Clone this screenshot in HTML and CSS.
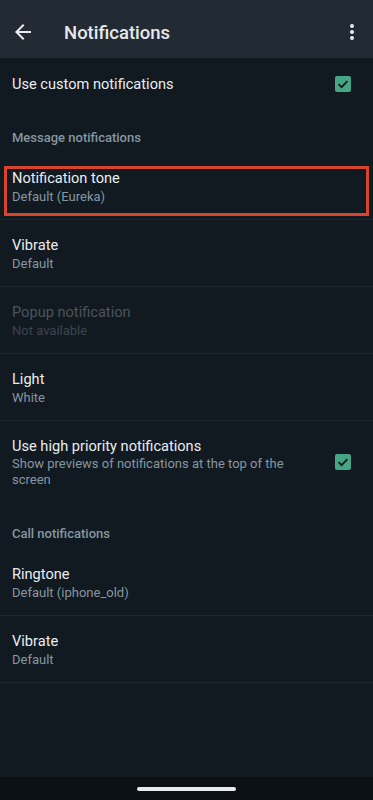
FILE: index.html
```html
<!DOCTYPE html>
<html>
<head>
<meta charset="utf-8">
<meta name="viewport" content="width=device-width, initial-scale=1">
<link rel="stylesheet" href="styles.css">
</head>
<body>
<div class="screen">
  <header class="appbar">
    <button class="icon-btn back" aria-label="Back">
      <svg width="24" height="24" viewBox="0 0 24 24"><path d="M20 11H7.83l5.59-5.59L12 4l-8 8 8 8 1.41-1.41L7.83 13H20v-2z" fill="#e9edef"/></svg>
    </button>
    <h1 class="title">Notifications</h1>
    <button class="icon-btn more" aria-label="More options">
      <svg width="24" height="24" viewBox="0 0 24 24"><circle cx="12" cy="6" r="2" fill="#e9edef"/><circle cx="12" cy="12" r="2" fill="#e9edef"/><circle cx="12" cy="18" r="2" fill="#e9edef"/></svg>
    </button>
  </header>

  <main class="content">
    <div class="row single">
      <div class="text"><div class="primary">Use custom notifications</div></div>
      <span class="check"><svg width="16" height="16" viewBox="0 0 16 16"><path d="M3.6 8.2l3 3 5.8-6" fill="none" stroke="#121a21" stroke-width="1.8"/></svg></span>
    </div>

    <div class="section">Message notifications</div>

    <div class="row highlighted divided">
      <div class="text"><div class="primary">Notification tone</div><div class="secondary">Default (Eureka)</div></div>
    </div>
    <div class="row divided">
      <div class="text"><div class="primary">Vibrate</div><div class="secondary">Default</div></div>
    </div>
    <div class="row divided disabled">
      <div class="text"><div class="primary">Popup notification</div><div class="secondary">Not available</div></div>
    </div>
    <div class="row divided">
      <div class="text"><div class="primary">Light</div><div class="secondary">White</div></div>
    </div>
    <div class="row">
      <div class="text narrow"><div class="primary">Use high priority notifications</div><div class="secondary multi">Show previews of notifications at the top of the screen</div></div>
      <span class="check"><svg width="16" height="16" viewBox="0 0 16 16"><path d="M3.6 8.2l3 3 5.8-6" fill="none" stroke="#121a21" stroke-width="1.8"/></svg></span>
    </div>

    <div class="section call">Call notifications</div>

    <div class="row divided">
      <div class="text"><div class="primary">Ringtone</div><div class="secondary">Default (iphone_old)</div></div>
    </div>
    <div class="row divided">
      <div class="text"><div class="primary">Vibrate</div><div class="secondary">Default</div></div>
    </div>
  </main>

  <footer class="navbar"><span class="handle"></span></footer>
</div>
</body>
</html>
```

FILE: styles.css
```css
* { box-sizing: border-box; }
html, body { margin: 0; padding: 0; background: #121a21; }
body { font-family: Roboto, "Noto Sans", "Liberation Sans", sans-serif; color: #e9edef; }

.screen { width: 373px; height: 800px; display: flex; flex-direction: column; overflow: hidden; }

.appbar { height: 58px; flex: none; background: #222b33; display: flex; align-items: center; padding: 0 9px 0 11px; }
.icon-btn { background: none; border: 0; padding: 0; width: 24px; height: 24px; display: flex; align-items: center; justify-content: center; }
.icon-btn svg { display: block; }
.back { margin-top: 6px; width: 24px; }
.title { flex: 1; margin: 0 0 0 29px; font-size: 18.5px; font-weight: 500; line-height: 24px; padding-top: 7px; color: #e6e9eb; letter-spacing: 0; }
.more { margin-top: 6px; }

.content { flex: 1; display: flex; flex-direction: column; }

.row { position: relative; display: flex; align-items: center; padding: 15px 22px 13px 12px; }
.row.single { padding-top: 16px; padding-bottom: 14px; }
.row.divided { border-bottom: 1px solid #1e272e; }
.text { flex: 1; min-width: 0; }
.text.narrow { padding-right: 34px; }
.primary { font-size: 14.6px; line-height: 20px; color: #e9edef; }
.secondary { font-size: 13px; line-height: 18px; color: #8696a0; }
.secondary.multi { line-height: 16px; }
.disabled .primary { color: #4a545c; }
.disabled .secondary { color: #3b454c; }

.highlighted::after { content: ""; position: absolute; left: 4px; right: 4px; top: 13px; height: 44px; border: 3px solid #d8432c; pointer-events: none; }

.check { flex: none; width: 16px; height: 16px; border-radius: 2px; background: #45a585; display: flex; align-items: center; justify-content: center; }
.check svg { display: block; }

.section { font-size: 13px; font-weight: 500; line-height: 20px; color: #8696a0; padding: 20px 12px 5px; }
.section.call { padding-top: 23px; }

.navbar { height: 23px; flex: none; background: #0c1115; display: flex; justify-content: center; padding-top: 10px; }
.handle { display: block; width: 99px; height: 4px; border-radius: 2px; background: #e8eaed; }
```
